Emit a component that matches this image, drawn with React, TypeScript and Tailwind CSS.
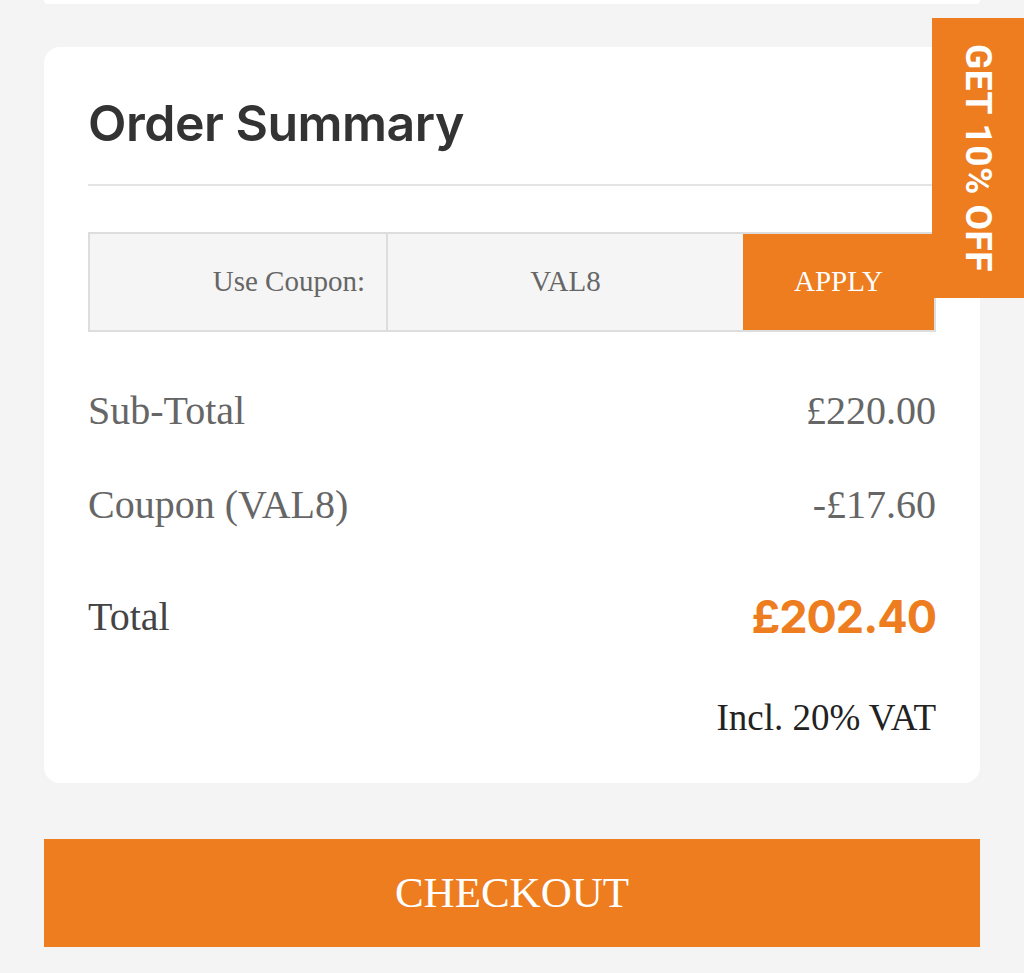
const rows = [
  { label: 'Sub-Total', value: '£220.00' },
  { label: 'Coupon (VAL8)', value: '-£17.60' },
];

export default function App() {
  return (
    <div className="relative min-h-[973px] bg-[#f4f4f4] px-[44px] pb-[26px] font-['Liberation_Serif',serif]">
      <div className="h-[4px] rounded-b-2xl bg-white" />

      <section className="mt-[43px] rounded-2xl bg-white px-[44px] pt-[48px] pb-[37px]">
        <h2 className="font-['Inter',sans-serif] text-[50px] font-semibold leading-[56px] tracking-[-0.5px] text-[#333]">
          Order Summary
        </h2>
        <div className="mt-[33px] h-[2px] bg-[#e4e4e4]" />

        <div className="mt-[46px] flex h-[100px] border-2 border-[#dddddd] text-[29px]">
          <div className="flex w-[296px] items-center justify-end bg-[#f5f5f5] pr-[21px] text-[#666]">
            Use Coupon:
          </div>
          <div className="flex w-[357px] items-center justify-center border-l-2 border-[#dddddd] bg-[#f5f5f5] text-[#666]">
            VAL8
          </div>
          <button className="flex flex-1 items-center justify-center bg-[#ed7d1f] text-white">
            APPLY
          </button>
        </div>

        <div className="mt-[32px]">
          {rows.map((row) => (
            <div key={row.label} className="flex h-[94px] items-center justify-between text-[40px] text-[#666]">
              <span>{row.label}</span>
              <span>{row.value}</span>
            </div>
          ))}
        </div>

        <div className="mt-[20px] flex h-[90px] items-center justify-between">
          <span className="text-[40px] text-[#444]">Total</span>
          <span className="font-['Inter',sans-serif] text-[45px] font-bold tracking-[-1px] text-[#ed7d1f]">
            £202.40
          </span>
        </div>

        <div className="mt-[28px] flex h-[56px] items-center justify-end text-[37px] text-[#222]">
          Incl. 20% VAT
        </div>
      </section>

      <button className="mt-[56px] flex h-[108px] w-full items-center justify-center bg-[#ed7d1f] text-[43px] text-white">
        CHECKOUT
      </button>

      <div className="absolute top-[18px] right-0 flex h-[280px] w-[92px] items-center justify-center bg-[#ed7d1f]">
        <span className="font-['Roboto',sans-serif] text-[37px] font-bold tracking-[0.5px] text-white [writing-mode:vertical-rl]">
          GET 10% OFF
        </span>
      </div>
    </div>
  );
}
